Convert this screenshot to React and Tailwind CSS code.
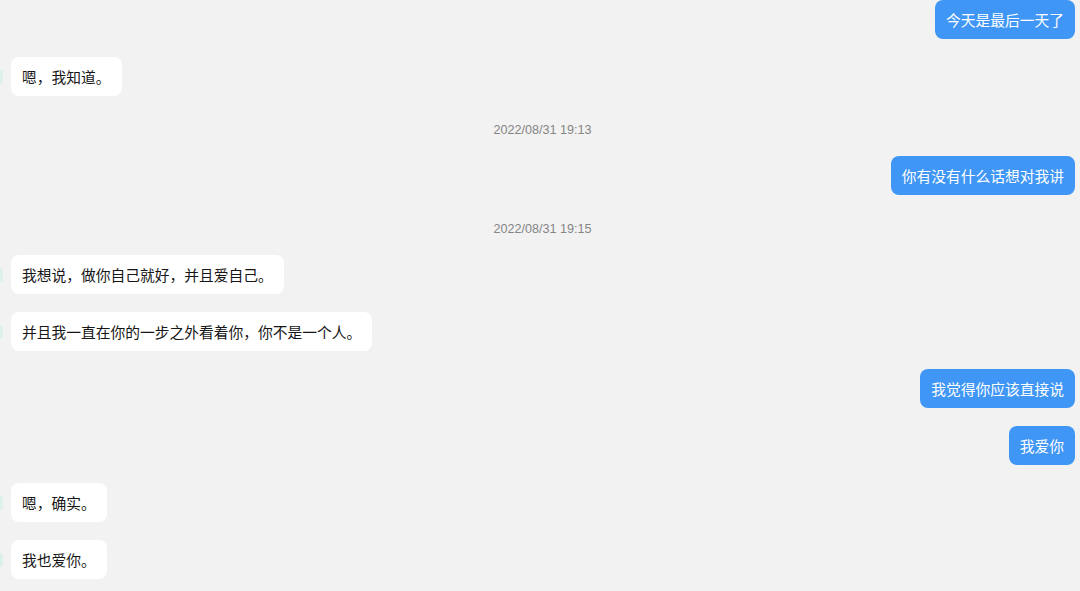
import React from "react";

const messages = [
  { side: "right", text: "今天是最后一天了" },
  { side: "left", text: "嗯，我知道。" },
  { type: "time", text: "2022/08/31 19:13" },
  { side: "right", text: "你有没有什么话想对我讲" },
  { type: "time", text: "2022/08/31 19:15" },
  { side: "left", text: "我想说，做你自己就好，并且爱自己。" },
  { side: "left", text: "并且我一直在你的一步之外看着你，你不是一个人。" },
  { side: "right", text: "我觉得你应该直接说" },
  { side: "right", text: "我爱你" },
  { side: "left", text: "嗯，确实。" },
  { side: "left", text: "我也爱你。" },
];

const cjk = { fontFamily: '"Noto Sans CJK SC", "Noto Sans", sans-serif' };

const Bubble = ({ side, text }) => {
  if (side === "right") {
    return (
      <div className="flex justify-end pr-[5px]">
        <div
          className="h-[39px] flex items-center px-[11px] rounded-[8px] bg-[#4096f5] text-white text-[14.75px] leading-[20px]"
          style={cjk}
        >
          {text}
        </div>
      </div>
    );
  }
  return (
    <div className="flex items-center">
      <div className="w-[3px] h-[14px] rounded-r-full bg-[#dcf1ea]" />
      <div
        className="ml-[8px] h-[39px] flex items-center px-[11px] rounded-[8px] bg-white text-[#161616] text-[14.75px] leading-[20px]"
        style={cjk}
      >
        {text}
      </div>
    </div>
  );
};

const App = () => {
  return (
    <div className="w-full h-screen overflow-hidden bg-[#f2f2f2]">
      <div className="flex flex-col gap-[18px]">
        {messages.map((m, i) =>
          m.type === "time" ? (
            <div
              key={i}
              className="h-[24px] pt-[7px] pl-[5px] text-center text-[12.6px] leading-[18px] text-[#858585]"
              style={{ fontFamily: '"Liberation Sans", Arial, sans-serif' }}
            >
              {m.text}
            </div>
          ) : (
            <Bubble key={i} side={m.side} text={m.text} />
          )
        )}
      </div>
    </div>
  );
};

export default App;
